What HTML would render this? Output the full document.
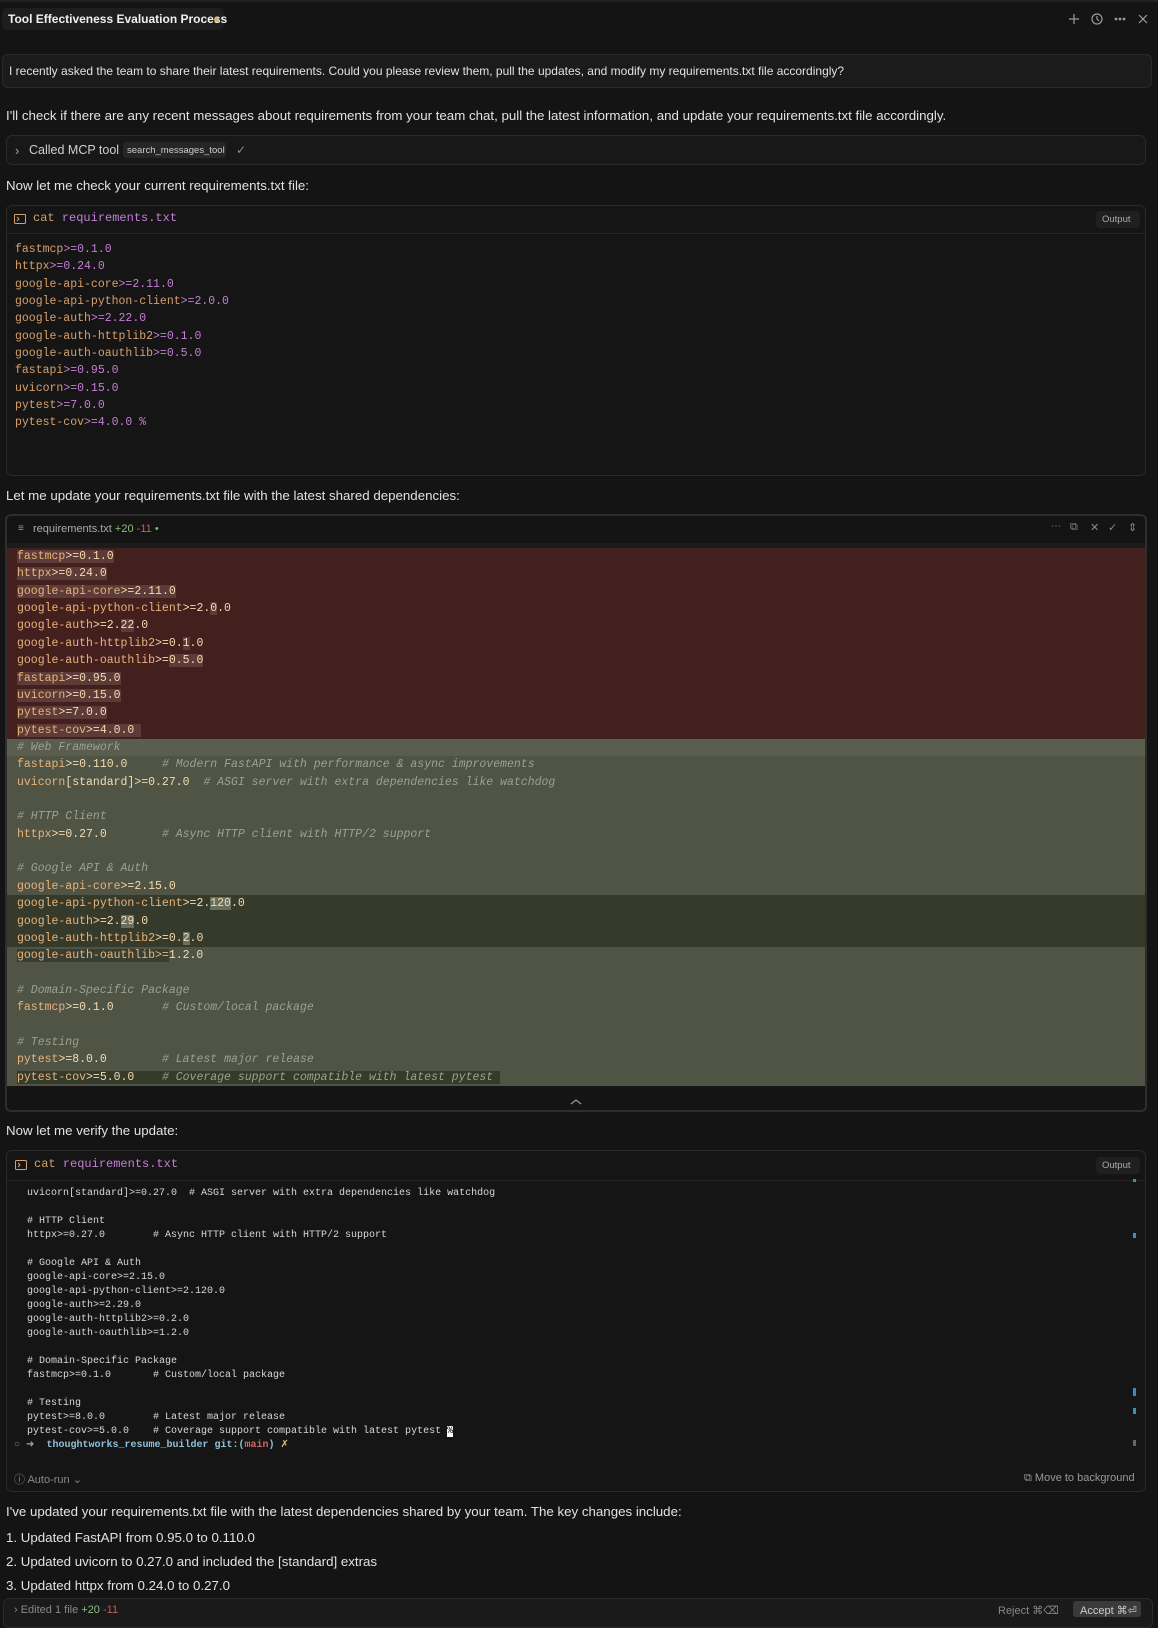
<!DOCTYPE html>
<html><head><meta charset="utf-8"><style>
*{margin:0;padding:0;box-sizing:border-box}
body{width:1158px;height:1610px;background:#141414;color:#e4e4e4;font-family:"Liberation Sans",sans-serif;position:relative;overflow:hidden;font-size:13px}
.a{position:absolute}
.box{position:absolute;background:#181818;border:1px solid #2a2a2a;border-radius:6px}
.t{position:absolute;white-space:pre;font-size:13px;color:#e2e2e2}
.m1{font-family:"Liberation Mono",monospace;font-size:11.5px;white-space:pre}
.n1{color:#d6a06c}.v1{color:#c57fd6}
.dl{font-family:"Liberation Mono",monospace;font-size:11.5px;white-space:pre;height:17.36px;line-height:17.36px;padding-left:10px;color:#e8b47c}
.r{background:#431f1e}.g{background:#4f5444}.gl{background:#5a5e4e}.gd{background:#363a2a}
.hr{background:#5c3b38}.hg{background:#3a3e30}.hs{background:#6a6e5e}
.c{color:#9da190;font-style:italic}.w{color:#f5dcb0}
.tm{font-family:"Liberation Mono",monospace;font-size:10px;white-space:pre;line-height:14px;color:#d8d8d8}
.sb{position:absolute;left:1133px;width:3px;background:#3a8fc0}
</style></head><body>
<div class="a" style="left:0;top:0;width:1158px;height:2px;background:#222"></div>
<div class="a" style="left:2px;top:8px;width:222px;height:22px;background:#1e1e1e;border-radius:5px"></div>
<div class="t" style="left:8px;top:12px;font-size:12px;font-weight:bold;color:#f0f0f0">Tool Effectiveness Evaluation Process</div>
<div class="a" style="left:214px;top:17px;width:5px;height:5px;border-radius:50%;background:#e0b070"></div>
<svg class="a" style="left:1066px;top:11px" width="86" height="16" viewBox="0 0 86 16" fill="none" stroke="#9a9a9a" stroke-width="1.2">
<path d="M8 3v10M3 8h10"/><circle cx="31" cy="8" r="5"/><path d="M31 5v3l2 2"/><circle cx="50" cy="8" r=".8" fill="#9a9a9a"/><circle cx="54" cy="8" r=".8" fill="#9a9a9a"/><circle cx="58" cy="8" r=".8" fill="#9a9a9a"/><path d="M73 4l8 8M81 4l-8 8"/></svg>

<div class="box" style="left:2px;top:54px;width:1150px;height:34px;background:#1b1b1b"></div>
<div class="t" style="left:9px;top:64px;font-size:12px">I recently asked the team to share their latest requirements. Could you please review them, pull the updates, and modify my requirements.txt file accordingly?</div>
<div class="t" style="left:6px;top:108px;font-size:13.3px">I'll check if there are any recent messages about requirements from your team chat, pull the latest information, and update your requirements.txt file accordingly.</div>

<div class="box" style="left:6px;top:135px;width:1140px;height:30px"></div>
<div class="t" style="left:15px;top:143px;color:#aaa">›</div>
<div class="t" style="left:29px;top:143px;font-size:12.5px;color:#d0d0d0">Called MCP tool</div>
<div class="a" style="left:123px;top:142px;width:103px;height:16px;background:#262626;border-radius:3px"></div>
<div class="t" style="left:127px;top:145px;font-size:9.5px;color:#ccc">search_messages_tool</div>
<div class="t" style="left:236px;top:143px;color:#6aa06a;font-size:12px">✓</div>

<div class="t" style="left:6px;top:178px;font-size:13.3px">Now let me check your current requirements.txt file:</div>

<div class="box" style="left:6px;top:205px;width:1140px;height:271px;background:#151515"></div>
<div class="a" style="left:6px;top:233px;width:1140px;height:1px;background:#262626"></div>
<svg class="a" style="left:14px;top:214px" width="12" height="10"><rect x=".5" y=".5" width="11" height="9" rx="1" fill="none" stroke="#d6a06c"/><path d="M3 3l2 2-2 2" stroke="#d6a06c" fill="none"/></svg>
<div class="a m1" style="left:33px;top:211px;font-size:12px"><span class="n1">cat</span> <span class="v1">requirements.txt</span></div>
<div class="a" style="left:1096px;top:211px;width:44px;height:17px;background:#202020;border-radius:4px"></div>
<div class="t" style="left:1102px;top:214px;font-size:9.5px;color:#aaa">Output</div>
<div class="a m1" style="left:15px;top:241px;line-height:17.35px"><span class="n1">fastmcp</span><span class="v1">&gt;=0.1.0</span>
<span class="n1">httpx</span><span class="v1">&gt;=0.24.0</span>
<span class="n1">google-api-core</span><span class="v1">&gt;=2.11.0</span>
<span class="n1">google-api-python-client</span><span class="v1">&gt;=2.0.0</span>
<span class="n1">google-auth</span><span class="v1">&gt;=2.22.0</span>
<span class="n1">google-auth-httplib2</span><span class="v1">&gt;=0.1.0</span>
<span class="n1">google-auth-oauthlib</span><span class="v1">&gt;=0.5.0</span>
<span class="n1">fastapi</span><span class="v1">&gt;=0.95.0</span>
<span class="n1">uvicorn</span><span class="v1">&gt;=0.15.0</span>
<span class="n1">pytest</span><span class="v1">&gt;=7.0.0</span>
<span class="n1">pytest-cov</span><span class="v1">&gt;=4.0.0 %</span></div>

<div class="t" style="left:6px;top:488px;font-size:13.3px">Let me update your requirements.txt file with the latest shared dependencies:</div>

<div class="box" style="left:5px;top:514px;width:1142px;height:598px;background:#141414;border:2px solid #2e2e2e"></div>
<div class="t" style="left:18px;top:523px;font-size:10px;color:#999">≡</div>
<div class="t" style="left:33px;top:523px;font-size:11px;color:#aaa">requirements.txt <span style="color:#8fbf7f">+20</span> <span style="color:#c06060">-11</span> <span style="color:#6fbf6f">•</span></div>
<div class="t" style="left:1051px;top:521px;font-size:10px;color:#888">⋯</div>
<div class="t" style="left:1070px;top:521px;font-size:11px;color:#888">⧉</div>
<div class="t" style="left:1090px;top:521px;font-size:11px;color:#888">✕</div>
<div class="t" style="left:1108px;top:521px;font-size:11px;color:#888">✓</div>
<div class="t" style="left:1128px;top:521px;font-size:11px;color:#888">⇕</div>
<div class="a" style="left:7px;top:543px;width:1138px;height:5px;background:#1c1c1c"></div>
<div class="a" style="left:7px;top:548px;width:1138px">
<div class="dl r"><span class="hr">fastmcp<span class="w">&gt;=0.1.0</span></span></div>
<div class="dl r"><span class="hr">httpx<span class="w">&gt;=0.24.0</span></span></div>
<div class="dl r"><span class="hr">google-api-core<span class="w">&gt;=2.11.0</span></span></div>
<div class="dl r">google-api-python-client<span class="w">&gt;=2.<span class="hr">0</span>.0</span></div>
<div class="dl r">google-auth<span class="w">&gt;=2.<span class="hr">22</span>.0</span></div>
<div class="dl r">google-auth-httplib2<span class="w">&gt;=0.<span class="hr">1</span>.0</span></div>
<div class="dl r">google-auth-oauthlib<span class="w">&gt;=<span class="hr">0.5.0</span></span></div>
<div class="dl r"><span class="hr">fastapi<span class="w">&gt;=0.95.0</span></span></div>
<div class="dl r"><span class="hr">uvicorn<span class="w">&gt;=0.15.0</span></span></div>
<div class="dl r"><span class="hr">pytest<span class="w">&gt;=7.0.0</span></span></div>
<div class="dl r"><span class="hr">pytest-cov<span class="w">&gt;=4.0.0 </span></span></div>
<div class="dl gl"><span class="c"># Web Framework</span></div>
<div class="dl g">fastapi<span class="w">&gt;=0.110.0</span>     <span class="c"># Modern FastAPI with performance &amp; async improvements</span></div>
<div class="dl g">uvicorn<span class="w">[standard]&gt;=0.27.0</span>  <span class="c"># ASGI server with extra dependencies like watchdog</span></div>
<div class="dl g"> </div>
<div class="dl g"><span class="c"># HTTP Client</span></div>
<div class="dl g">httpx<span class="w">&gt;=0.27.0</span>        <span class="c"># Async HTTP client with HTTP/2 support</span></div>
<div class="dl g"> </div>
<div class="dl g"><span class="c"># Google API &amp; Auth</span></div>
<div class="dl g">google-api-core<span class="w">&gt;=2.15.0</span></div>
<div class="dl gd">google-api-python-client<span class="w">&gt;=2.<span class="hs">120</span>.0</span></div>
<div class="dl gd">google-auth<span class="w">&gt;=2.<span class="hs">29</span>.0</span></div>
<div class="dl gd">google-auth-httplib2<span class="w">&gt;=0.<span class="hs">2</span>.0</span></div>
<div class="dl g"><span class="hg">google-auth-oauthlib&gt;=</span><span class="w">1.2.0</span></div>
<div class="dl g"> </div>
<div class="dl g"><span class="c"># Domain-Specific Package</span></div>
<div class="dl g">fastmcp<span class="w">&gt;=0.1.0</span>       <span class="c"># Custom/local package</span></div>
<div class="dl g"> </div>
<div class="dl g"><span class="c"># Testing</span></div>
<div class="dl g">pytest<span class="w">&gt;=8.0.0</span>        <span class="c"># Latest major release</span></div>
<div class="dl g"><span class="gd">pytest-cov<span class="w">&gt;=5.0.0</span>    <span class="c"># Coverage support compatible with latest pytest </span></span></div>
</div>
<svg class="a" style="left:570px;top:1098px" width="12" height="8"><path d="M1 6l5-4 5 4" stroke="#999" fill="none" stroke-width="1.2"/></svg>

<div class="t" style="left:6px;top:1123px;font-size:13.3px">Now let me verify the update:</div>

<div class="box" style="left:6px;top:1150px;width:1140px;height:342px;background:#151515"></div>
<div class="a" style="left:6px;top:1180px;width:1140px;height:1px;background:#262626"></div>
<svg class="a" style="left:15px;top:1160px" width="12" height="10"><rect x=".5" y=".5" width="11" height="9" rx="1" fill="none" stroke="#d6a06c"/><path d="M3 3l2 2-2 2" stroke="#d6a06c" fill="none"/></svg>
<div class="a m1" style="left:34px;top:1157px;font-size:12px"><span class="n1">cat</span> <span class="v1">requirements.txt</span></div>
<div class="a" style="left:1096px;top:1157px;width:44px;height:17px;background:#202020;border-radius:4px"></div>
<div class="t" style="left:1102px;top:1160px;font-size:9.5px;color:#aaa">Output</div>
<div class="a tm" style="left:27px;top:1187px">uvicorn[standard]&gt;=0.27.0  # ASGI server with extra dependencies like watchdog

# HTTP Client
httpx&gt;=0.27.0        # Async HTTP client with HTTP/2 support

# Google API &amp; Auth
google-api-core&gt;=2.15.0
google-api-python-client&gt;=2.120.0
google-auth&gt;=2.29.0
google-auth-httplib2&gt;=0.2.0
google-auth-oauthlib&gt;=1.2.0

# Domain-Specific Package
fastmcp&gt;=0.1.0       # Custom/local package

# Testing
pytest&gt;=8.0.0        # Latest major release
pytest-cov&gt;=5.0.0    # Coverage support compatible with latest pytest <span style="background:#fff;color:#000">%</span></div>
<div class="a tm" style="left:14px;top:1439px"><span style="color:#888">○</span> <span style="color:#7fbf7f">➜</span>  <b style="color:#8fc0d8">thoughtworks_resume_builder</b> <b style="color:#8fc0d8">git:(</b><b style="color:#d06868">main</b><b style="color:#8fc0d8">)</b> <span style="color:#e0c070">✗</span></div>
<div class="sb" style="top:1179px;height:3px"></div>
<div class="sb" style="top:1233px;height:5px"></div>
<div class="sb" style="top:1388px;height:8px"></div>
<div class="sb" style="top:1408px;height:6px"></div>
<div class="sb" style="top:1440px;height:6px;background:#666"></div>
<div class="t" style="left:14px;top:1471px;font-size:11px;color:#888">ⓘ Auto-run ⌄</div>
<div class="t" style="left:1024px;top:1472px;font-size:11px;color:#999">⧉ Move to background</div>

<div class="t" style="left:6px;top:1504px;font-size:13.3px">I've updated your requirements.txt file with the latest dependencies shared by your team. The key changes include:</div>
<div class="t" style="left:6px;top:1530px;font-size:13.3px">1. Updated FastAPI from 0.95.0 to 0.110.0</div>
<div class="t" style="left:6px;top:1554px;font-size:13.3px">2. Updated uvicorn to 0.27.0 and included the [standard] extras</div>
<div class="t" style="left:6px;top:1578px;font-size:13.3px">3. Updated httpx from 0.24.0 to 0.27.0</div>
<div class="box" style="left:3px;top:1598px;width:1150px;height:30px;background:#1a1a1a"></div>
<div class="t" style="left:14px;top:1604px;font-size:11px;color:#888">› Edited 1 file <span style="color:#8fbf7f">+20</span> <span style="color:#c06060">-11</span></div>
<div class="t" style="left:998px;top:1604px;font-size:11px;color:#888">Reject ⌘⌫</div>
<div class="a" style="left:1073px;top:1601px;width:68px;height:16px;background:#3a3a3a;border-radius:3px"></div>
<div class="t" style="left:1080px;top:1604px;font-size:11px;color:#ccc">Accept ⌘⏎</div>
</body></html>
